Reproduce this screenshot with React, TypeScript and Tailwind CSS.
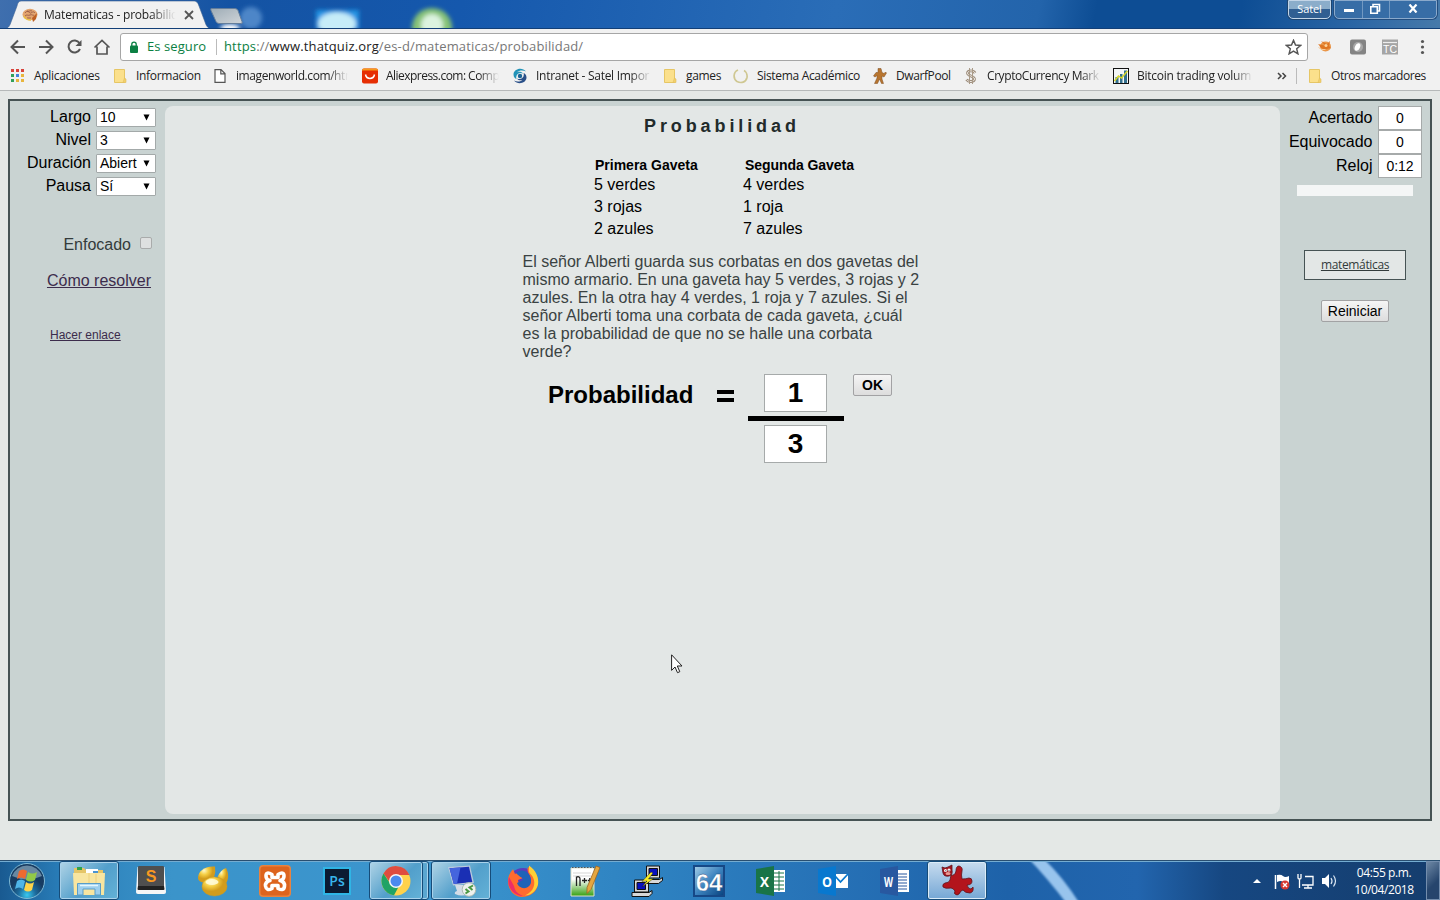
import React from "react";

const ui = "font-['Open_Sans','Noto_Sans',sans-serif]";

type MarkProps = { w: string; textCls: string; label: string; fade?: boolean; icon: React.ReactNode };

function Mark({ w, textCls, label, fade, icon }: MarkProps) {
  return (
    <div className={`flex shrink-0 items-center ${w}`}>
      <span className="h-4 w-4 shrink-0">{icon}</span>
      <span
        className={`ml-2 whitespace-nowrap ${textCls} ${fade ? "[mask-image:linear-gradient(to_right,#000_82%,transparent)]" : ""}`}
      >
        {label}
      </span>
    </div>
  );
}

const Folder = () => (
  <svg width="16" height="16" viewBox="0 0 16 16">
    <path d="M2.5 1.5h10v13h-10z" fill="#fbe08c" stroke="#e6c665" />
    <path d="M12.5 10l1.5 1v3.5h-3z" fill="#f3d06d" stroke="#e0bd5c" strokeWidth=".6" />
  </svg>
);

const AppsGrid = () => (
  <svg width="16" height="16" viewBox="0 0 16 16">
    {["#d8433b", "#d8433b", "#d8433b", "#31a05a", "#4382dd", "#e8b53c", "#31a05a", "#e8b53c", "#e8b53c"].map((c, i) => (
      <rect key={i} x={1 + (i % 3) * 5} y={1 + Math.floor(i / 3) * 5} width="3" height="3" fill={c} />
    ))}
  </svg>
);

const Page = () => (
  <svg width="16" height="16" viewBox="0 0 16 16" fill="#fff" stroke="#555" strokeWidth="1.2">
    <path d="M3 1.6h6l4 4v8.8H3zM8.8 1.6v4.2H13" />
  </svg>
);

const Ali = () => (
  <svg width="16" height="16" viewBox="0 0 16 16">
    <rect y=".5" width="16" height="15" rx="2" fill="#e62e04" />
    <path d="M0 2.500q0-2 2-2h12q2 0 2 2z" fill="#f79a1c" />
    <path d="M3.500 6.500c1 5.200 8 5.200 9 0" fill="none" stroke="#fff" strokeWidth="1.500" />
  </svg>
);

const Swirl = () => (
  <svg width="16" height="16" viewBox="0 0 16 16">
    <path d="M14 3.500C10-1.500 1.500 1 1.500 6.500c0 2.500 1.500 4 3 4.500C3 7 7 3.500 11 5.500c-1-2-5-2.500-6-1 2-2.500 6.500-2.500 9-1z" fill="#2293b8" />
    <path d="M2 12.500c4 5 12.500 2.500 12.500-3 0-2.500-1.500-4-3-4.500C13 9 9 12.500 5 10.500c1 2 5 2.500 6 1-2 2.500-6.500 2.500-9 1z" fill="#294f88" />
    <circle cx="8" cy="8" r="2.200" fill="#1b6597" />
  </svg>
);

const Ring = () => (
  <svg width="16" height="16" viewBox="0 0 16 16" fill="none" stroke="#cfc792" strokeWidth="1.700">
    <path d="M5 2C0 4 0 11 4 13.500c4 2 9 1 10-4 .5-3-1-6-3-7" />
  </svg>
);

const Dwarf = () => (
  <svg width="16" height="16" viewBox="0 0 16 16" fill="#b8752f" stroke="#7d4c20" strokeWidth=".5">
    <path d="M6 .500h3l1 4 2 1 1.500-1.500 1 1-2.500 4-2-1v3l1.500 4.500H9.500L7.500 11 5.500 15.500h-3L5 10V7.500l-2 1.500-1.500-1L4 4.500h2z" />
  </svg>
);

const Dollar = () => (
  <svg width="16" height="16" viewBox="0 0 16 16" fill="none">
    <path d="M12 5C10.500 2.200 5 2.200 4.500 5s7 3 7 6-6 3.500-8 .500" stroke="#9d8d7c" strokeWidth="2.800" />
    <path d="M12 5C10.500 2.200 5 2.200 4.500 5s7 3 7 6-6 3.500-8 .500" stroke="#f1ece5" strokeWidth="1" />
    <path d="M6.500 0v16M9.500 0v16" stroke="#a99a88" strokeWidth="1" />
  </svg>
);

const Bars = () => (
  <svg width="16" height="16" viewBox="0 0 16 16">
    <rect x=".5" y=".5" width="15" height="15" fill="#f3f6f7" stroke="#111" />
    <path d="M2.500 9h3v6h-3zM7 6h2.500v9H7zM11 2.500h3V15h-3z" fill="#33708e" />
    <path d="M1.500 13l4-5 3 2 6-7" stroke="#d6d529" strokeWidth="1.500" fill="none" />
  </svg>
);

const Brain = () => (
  <svg width="16" height="16" viewBox="0 0 16 16">
    <ellipse cx="8" cy="7.500" rx="7.500" ry="5.800" fill="#e3a56e" />
    <path d="M10 11l5-5-1 6-3 3z" fill="#bd5f22" />
    <path d="M3 6c2-3 4-1 5 0s3-3 5 0M3 9c2-2 3 0 5-1s3 1 4 0M5 4c2 1 3-1 5 0M5 11h4" fill="none" stroke="#8f5040" strokeWidth=".8" />
    <path d="M2 9c1 3 4 4 7 4" fill="none" stroke="#e8c044" strokeWidth="1.400" />
  </svg>
);

function TitleBar() {
  return (
    <div className="relative h-[29px] shrink-0 overflow-hidden border-b border-[#123f77] bg-[linear-gradient(100deg,#3f6fae_0%,#1453a3_16%,#1558ad_32%,#2a6db7_58%,#2364ab_72%,#0d4d94_76%,#0d4d94_86%,#2b66a5_94%,#477aaa_100%)]">
      <svg className="absolute left-0 top-0" width="480" height="29" viewBox="0 0 480 29">
        <defs>
          <filter id="soft" x="-30%" y="-30%" width="160%" height="160%"><feGaussianBlur stdDeviation="2" /></filter>
          <linearGradient id="nt" x2="1" y2="1"><stop stopColor="#9eacb6" /><stop offset="1" stopColor="#d0d5d9" /></linearGradient>
        </defs>
        <g filter="url(#soft)">
          <circle cx="251" cy="18" r="11" fill="#4e86c8" />
          <ellipse cx="230" cy="28" rx="10" ry="4" fill="#fff" />
          <path d="M316 10h43v20h-43z" fill="#2494e4" />
          <ellipse cx="337" cy="24" rx="19" ry="12" fill="#c6ecf8" />
          <circle cx="432" cy="28" r="20" fill="#86c277" />
          <circle cx="432" cy="25" r="11" fill="#dcf3df" />
        </g>
        <path d="M211 8.500h24q2 0 3 2l4 11q1 2-1 2h-22q-2 0-3-2l-5-11q-.5-2 0-2z" fill="url(#nt)" stroke="#647e9b" />
        <path d="M5 29c4-1 5-4 6-7l6-16c1-4 2-5 5-5h171c4 0 5 2 6 5l6 16c1 3 2 6 6 7z" fill="#f1f1f1" stroke="#395f92" strokeWidth=".6" />
      </svg>
      <div className="relative flex h-full items-center pl-[22px] pt-px">
        <Brain />
        <div className={`${ui} ml-[6px] w-[133px] whitespace-nowrap text-[12px] tracking-[-0.2px] text-[#222] [mask-image:linear-gradient(to_right,#000_80%,transparent_99%)]`}>
          Matematicas - probabilid
        </div>
        <svg className="ml-[7px]" width="10" height="10" viewBox="0 0 10 10" stroke="#555" strokeWidth="1.800"><path d="M1 1l8 8M9 1L1 9" /></svg>
        <div className="ml-auto flex h-full items-start self-start">
          <div className={`${ui} -mt-px mr-[3px] flex h-[19px] w-[43px] items-center justify-center rounded-b-[5px] border border-[#c3d5e7] bg-[linear-gradient(#8badca_50%,#315f92_50%)] text-[11px] tracking-[-0.1px] text-white shadow-[0_0_0_1px_#1e4570]`}>
            Satel
          </div>
          <div className="-mt-px mr-[3px] flex h-[19px] w-[103px] rounded-b-[5px] border border-[#8aa9cb] bg-[#376da6] shadow-[0_0_0_1px_#234e80]">
            <div className="flex w-[28px] items-center justify-center border-r border-[#7198c2]"><span className="mt-px h-[3px] w-[10px] bg-white" /></div>
            <div className="flex w-[27px] items-center justify-center border-r border-[#7198c2] pb-[2px] pr-[2px]">
              <svg width="12" height="12" viewBox="0 0 12 12" fill="none" stroke="#fff" strokeWidth="1.600"><path d="M4 3V1.500h6.500V8H9" /><path d="M1.800 3.800h6.500v6.500H1.800z" /></svg>
            </div>
            <div className="flex flex-1 items-center justify-center pb-[2px]"><svg width="10" height="9" viewBox="0 0 10 9" stroke="#fff" strokeWidth="2.200"><path d="M1.500.5l7 8M8.500.5l-7 8" /></svg></div>
          </div>
        </div>
      </div>
    </div>
  );
}

function AddressBar() {
  return (
    <div className="flex h-[32px] shrink-0 items-center bg-[#f1f1f1] pl-[8px] pt-[4px]">
      <svg width="104" height="20" viewBox="0 0 104 20" fill="none" stroke="#555" strokeWidth="2">
        <path d="M17 10H4M10 3.500L3.500 10l6.500 6.500" />
        <path d="M31 10h13M38 3.500l6.500 6.500-6.500 6.500" />
        <path d="M71.500 6A6 6 0 1 0 72 12" /><path d="M73.500 3v6h-6z" fill="#555" stroke="none" />
        <path d="M86.500 10.500L94 3.500l7.500 7M89 9.500V17h10V9.500" strokeWidth="1.700" />
      </svg>
      <div className={`${ui} ml-[8px] flex h-[28px] w-[1188px] items-center rounded-[3px] border border-[#a6a6a6] bg-white`}>
        <svg className="ml-[8px]" width="10" height="13" viewBox="0 0 10 13"><rect x="1" y="4.500" width="8" height="7.500" rx="1" fill="#0b8043" /><path d="M2.800 5V3.300a2.200 2.200 0 0 1 4.400 0V5" fill="none" stroke="#0b8043" strokeWidth="1.300" /></svg>
        <span className="ml-[8px] w-[69px] whitespace-nowrap text-[13px] tracking-[0.08px] text-[#0b8043]">Es seguro</span>
        <span className="h-[16px] w-px bg-[#bbb]" />
        <span className="ml-[7px] whitespace-nowrap text-[13px] tracking-[0.145px] text-[#777]"><span className="text-[#0b8043]">https</span>://<span className="text-[#222]">www.thatquiz.org</span>/es-d/matematicas/probabilidad/</span>
        <svg className="ml-auto mr-[5px]" width="17" height="16" viewBox="0 0 24 24" fill="none" stroke="#555" strokeWidth="2.200"><path d="M12 2l3 7 7.500.700-5.700 5 1.800 7.500L12 18.200l-6.600 4 1.800-7.500-5.700-5L9 9z" /></svg>
      </div>
      <svg className="ml-[8px]" width="116" height="20" viewBox="0 0 116 20">
        <ellipse cx="9.500" cy="9.500" rx="5.500" ry="5" fill="#ea9648" /><path d="M2 7l8 2-5-5 6 3 3-3-1 5 2 2-4 1q-6 1-8-4" fill="#df7622" /><path d="M2.500 10.500q3 3 7 2" fill="none" stroke="#f5c998" /><circle cx="10" cy="8.500" r="1.500" fill="#fbd49a" />
        <rect x="34" y="2.500" width="16" height="15" rx="2" fill="#848484" /><circle cx="42" cy="10" r="5" fill="#a8a8a8" /><ellipse cx="41.500" cy="10" rx="2.500" ry="4" transform="rotate(25 41.500 10)" fill="#fff" />
        <rect x="66" y="2.500" width="16" height="15" fill="#a5a5a5" /><path d="M67 5.500h14" stroke="#eee" strokeWidth="1.200" />
        <text x="74" y="16" textAnchor="middle" fontSize="10.500" fontFamily="Liberation Sans" fill="#fff">TC</text>
        <circle cx="106.500" cy="4.500" r="1.600" fill="#555" /><circle cx="106.500" cy="10" r="1.600" fill="#555" /><circle cx="106.500" cy="15.500" r="1.600" fill="#555" />
      </svg>
    </div>
  );
}

function Bookmarks() {
  return (
    <div className={`${ui} flex h-[30px] shrink-0 items-center border-b border-[#b5b9b9] bg-[#f1f1f1] pl-[10px] pt-px text-[12px] text-[#222]`}>
      <Mark w="w-[102px]" label="Aplicaciones" textCls="tracking-[-0.3px]" icon={<AppsGrid />} />
      <Mark w="w-[100px]" label="Informacion" textCls="-ml-px tracking-[-0.3px]" icon={<Folder />} />
      <Mark w="w-[150px]" label="imagenworld.com/htm" textCls="w-[112px] tracking-[-0.42px]" fade icon={<Page />} />
      <Mark w="w-[150px]" label="Aliexpress.com: Comp" textCls="w-[113px] tracking-[-0.53px]" fade icon={<Ali />} />
      <Mark w="w-[150px]" label="Intranet - Satel Impor" textCls="w-[115px] tracking-[-0.28px]" fade icon={<Swirl />} />
      <Mark w="w-[71px]" label="games" textCls="tracking-[-0.35px]" icon={<Folder />} />
      <Mark w="w-[139px]" label="Sistema Académico" textCls="tracking-[-0.32px]" icon={<Ring />} />
      <Mark w="w-[91px]" label="DwarfPool" textCls="tracking-[-0.4px]" icon={<Dwarf />} />
      <Mark w="w-[150px]" label="CryptoCurrency Mark" textCls="w-[114px] tracking-[-0.42px]" fade icon={<Dollar />} />
      <Mark w="w-[150px]" label="Bitcoin trading volum" textCls="w-[116px] tracking-[-0.26px]" fade icon={<Bars />} />
      <svg className="ml-[14px]" width="10" height="8" viewBox="0 0 10 8" fill="none" stroke="#444" strokeWidth="1.500"><path d="M1 1l3 3-3 3M5.500 1l3 3-3 3" /></svg>
      <span className="ml-[9px] h-[16px] w-px bg-[#bbb]" />
      <span className="ml-[10px]"><Mark w="w-[130px]" label="Otros marcadores" textCls="tracking-[-0.42px]" icon={<Folder />} /></span>
    </div>
  );
}

const options = [["Largo", "10"], ["Nivel", "3"], ["Duración", "Abiert"], ["Pausa", "Sí"]];
const scores = [["Acertado", "0"], ["Equivocado", "0"], ["Reloj", "0:12"]];
const button = "rounded-[2px] border border-[#a2a2a4] bg-[linear-gradient(#f5f5f5,#dddddd)] text-black";

function Quiz() {
  return (
    <div className="flex h-[769px] shrink-0 bg-[#e4e8e6] px-2 pb-[39px] pt-2 font-['Liberation_Sans',Arial,sans-serif] text-[16px] text-black">
      <div className="flex w-full border-2 border-[#465354] bg-[#c9d3d2] pb-[5px] pt-[5px]">
        <div className="w-[155px]">
          <div className="flex flex-col gap-[4px] pt-[2px]">
            {options.map(([label, value]) => (
              <div key={label} className="flex h-[19px] items-center justify-end pr-[9px]">
                <span className="mb-[2px] mr-[5px] leading-[18px]">{label}</span>
                <span className="flex h-[19px] w-[60px] items-center rounded-[1px] border border-[#a3a9a9] bg-white pl-[3px]">
                  <span className="w-[38px] whitespace-nowrap text-[14px] leading-[17px]">{value}</span>
                  <svg className="mb-px ml-[5px]" width="7" height="7" viewBox="0 0 7 7"><path d="M.5.5h6l-3 6z" /></svg>
                </span>
              </div>
            ))}
          </div>
          <div className="mt-[40px] flex h-[18px] items-center justify-end pr-[13px] text-[#333b3b]">
            Enfocado
            <span className="mb-[4px] ml-[9px] h-[12px] w-[12px] rounded-[2px] border border-[#a9abab] bg-[#dee0e0]" />
          </div>
          <div className="mt-[18px] h-[18px] pr-[14px] text-right leading-[18px] text-[#3c2c4c] underline">Cómo resolver</div>
          <div className="mt-[38px] pl-[40px] text-[12px] leading-[15px] text-[#3c2c4c] underline">Hacer enlace</div>
        </div>
        <div className="flex w-[1115px] flex-col rounded-[8px] bg-[#e3e7e6]">
          <div className="mt-[10px] h-[20px] pl-[479px] text-[18px] font-bold leading-[20px] tracking-[3.9px] text-[#222b2b]">Probabilidad</div>
          <div className="mt-[21px] grid grid-cols-[149px_149px] pl-[429px]">
            <div className="h-[17px] pl-px text-[14px] font-bold leading-[16px]">Primera Gaveta</div>
            <div className="h-[17px] pl-[2px] text-[14px] font-bold leading-[16px] tracking-[-0.06px]">Segunda Gaveta</div>
            {["5 verdes", "4 verdes", "3 rojas", "1 roja", "2 azules", "7 azules"].map((t) => (
              <div key={t} className="h-[22px] leading-[22px]">{t}</div>
            ))}
          </div>
          <div className="ml-[357.500px] mt-[13px] whitespace-nowrap leading-[18px] text-[#3a4242]">
            El señor Alberti guarda sus corbatas en dos gavetas del<br />mismo armario. En una gaveta hay 5 verdes, 3 rojas y 2<br />azules. En la otra hay 4 verdes, 1 roja y 7 azules. Si el<br />señor Alberti toma una corbata de cada gaveta, ¿cuál<br />es la probabilidad de que no se halle una corbata<br />verde?
          </div>
          <div className="mt-[13px] flex items-start pl-[383px] font-bold">
            <span className="mt-[7px] w-[169px] text-[24px] leading-[28px]">Probabilidad</span>
            <svg className="mt-[16px]" width="17" height="12" viewBox="0 0 17 12"><path d="M0 0h17v4H0zM0 8h17v4H0z" /></svg>
            <div className="ml-[14px] flex w-[96px] flex-col pl-[16px] text-[28px]">
              <span className="flex h-[38px] w-[63px] items-center justify-center border border-[#a6aaaa] bg-white">1</span>
              <span className="-ml-[16px] mb-[4px] mt-[4px] h-[5px] w-[96px] bg-black" />
              <span className="flex h-[38px] w-[63px] items-center justify-center border border-[#a6aaaa] bg-white">3</span>
            </div>
            <span className={`${button} ml-[9px] flex h-[22px] w-[39px] items-center justify-center text-[14px]`}>OK</span>
          </div>
        </div>
        <div className="flex flex-1 flex-col">
          {scores.map(([label, value]) => (
            <div key={label} className="flex h-[24px] items-center justify-end pr-[8px]">
              <span className="mr-[5.500px]">{label}</span>
              <span className="flex h-[24px] w-[44px] items-center justify-center border border-[#a6aaaa] bg-white pt-px text-[14px]">{value}</span>
            </div>
          ))}
          <div className="ml-[17px] mt-[7px] h-[11px] w-[116px] bg-[#f4f6f6]" />
          <div className={`${ui} ml-[24px] mt-[54px] flex h-[30px] w-[102px] items-center justify-center border border-[#465354] bg-[#e3e7e6] text-[12px] tracking-[-0.35px] text-[#333b3b] underline`}>matemáticas</div>
          <div className={`${button} ml-[41px] mt-[20px] flex h-[22px] w-[68px] items-center justify-center text-[14px]`}>Reiniciar</div>
        </div>
      </div>
    </div>
  );
}

const Explorer = () => (
  <svg width="32" height="32" viewBox="0 0 32 32">
    <path d="M1 3h10l2 2h17v24H1z" fill="#e5c567" /><path d="M4 2h5v3H4z" fill="#30a24a" /><path d="M13 4h12v4H13z" fill="#fff" /><path d="M20 6h5v3h-5z" fill="#4a94d2" />
    <path d="M0 8h32l-1 22H1z" fill="#f8e5a0" /><path d="M16 8v14M23 9v12" stroke="#ecd07f" /><path d="M4.500 30V18.500h23V30h-5.500v-6H10v6z" fill="#9dcfee" stroke="#589dc9" /><path d="M7 20.500h18" stroke="#e4f6ff" strokeWidth="1.500" />
  </svg>
);
const Sublime = () => (
  <svg width="32" height="32" viewBox="0 0 32 32"><path d="M2.500 2h27l1.500 25q0 2-2 2H3q-2 0-2-2z" fill="#f6f6f6" /><path d="M4 1h24q1 0 1 1v19H3V2q0-1 1-1z" fill="#4f4f4f" /><path d="M3 21h26l.500 3q0 1-1 1h-25q-1 0-1-1z" fill="#222" /><text x="16" y="16.500" textAnchor="middle" fontSize="16" fontWeight="bold" fontFamily="Liberation Sans" fill="#f89820">S</text></svg>
);
const Navicat = () => (
  <svg width="32" height="32" viewBox="0 0 32 32"><defs><radialGradient id="gold" cx=".35" cy=".25"><stop stopColor="#fff9c8" /><stop offset=".5" stopColor="#f5cf45" /><stop offset="1" stopColor="#d29c1c" /></radialGradient></defs><path d="M1 13C1 6 8 .500 18 1.500q1 5-1 11L8 18Q1 17 1 13z" fill="url(#gold)" /><path d="M20.500 12q3-7 8.500-9c3 5 3 12-1 17q-3-5-7.500-8z" fill="url(#gold)" /><ellipse cx="17.500" cy="21.500" rx="12.500" ry="9.500" fill="url(#gold)" stroke="#c99a20" strokeWidth=".5" /><ellipse cx="15" cy="17" rx="6.500" ry="3" fill="#fffbd5" opacity=".9" /></svg>
);
const Xampp = () => (
  <svg width="32" height="32" viewBox="0 0 32 32"><rect width="32" height="32" rx="4" fill="#e9833f" /><rect x="1.500" y="1.500" width="29" height="29" rx="3" fill="#dd641e" /><path d="M13 9.500Q7 6 7 11q0 4 4 4.500Q6 17 6.500 21q1 5.500 6.500 2.500v-3h6v3q6 3 6.500-2.500Q26 17 21 15.500q4-.5 4-4.500 0-5-6-1.500v3h-6z" fill="none" stroke="#fff" strokeWidth="3.600" strokeLinejoin="round" /></svg>
);
const Photoshop = () => (
  <svg width="30" height="30" viewBox="0 0 30 30"><rect x="2" y="2" width="26" height="26" fill="#0b1b32" stroke="#2fb5e5" strokeWidth="2" /><text x="15" y="19.500" textAnchor="middle" fontFamily="Open Sans" fontSize="14" fontWeight="600" fill="#38b6ed">Ps</text></svg>
);
const ChromeLogo = () => (
  <svg width="32" height="32" viewBox="0 0 32 32"><circle cx="16" cy="16" r="14.500" fill="#ffd24c" /><path d="M3.500 8.500A14.500 14.500 0 0 1 29.500 10H16a6 6 0 0 0-5.600 8z" fill="#df4c40" /><path d="M3.500 8.500l7 10.500c2 3 5 3.500 8 3l-4.500 8.300A14.500 14.500 0 0 1 3.500 8.500z" fill="#20a365" /><circle cx="16" cy="16" r="7" fill="#f6f6f6" /><circle cx="16" cy="16" r="5.500" fill="#4b89ef" /></svg>
);
const Remote = () => (
  <svg width="32" height="32" viewBox="0 0 32 32"><path d="M10 20h9l1 6q4 1 3 3-6 3-13 0-1-2 2-3z" fill="#d3dce6" /><path d="M3 2l22-1.500L29 18 8 20.500z" fill="#b9c8dc" /><path d="M4.500 3.200l19.500-1.400L27.300 17 8.800 19z" fill="#1a2fb4" /><path d="M4.500 3.200l11-.8L12 18.700l-3.200.3z" fill="#4565dd" /><circle cx="24" cy="24.500" r="6.800" fill="#eef1ee" stroke="#acb9b1" /><path d="M20.500 24l3 2.500-3 2M28 20.500l-3.500 2 3 2.500" stroke="#4b9843" strokeWidth="2" fill="none" /></svg>
);
const Firefox = () => (
  <svg width="32" height="32" viewBox="0 0 32 32"><circle cx="16" cy="17" r="14" fill="#5c3bbb" /><path d="M1 16C1 10 4 7 6 4l2 5c4-3 8 0 8 4l-5 2c1 9 12 9 13 1 0-7-5-8-3-14 6 3 11 9 10 17-1 8-8 13-16 13S1 25 1 16z" fill="#ff6b2e" /><path d="M9 8c5-6 16-1 15 9-1 8-12 8-14 1l6-3c0-3-4-3-7-7z" fill="#1f63b8" /><path d="M22 4V.5c7 5 10 12 9 19-2 8-9 11-13 11 9-4 11-12 8-18-1-3-5-4-4-8.500z" fill="#ffcf35" /><path d="M2 12c-3 10 5 19 14 19-7-3-8-6-9-10z" fill="#ed2d68" /></svg>
);
const Notepad = () => (
  <svg width="32" height="32" viewBox="0 0 32 32"><defs><linearGradient id="np" x2="0" y2="1"><stop offset=".4" stopColor="#fff" /><stop offset="1" stopColor="#35a010" /></linearGradient></defs><path d="M2 3h23v28H2z" fill="url(#np)" stroke="#e0e0cc" /><path d="M3 2.500h22" stroke="#555" strokeDasharray="1.500 1.500" /><path d="M4 8h18M4 11h18" stroke="#d5d5d5" /><path d="M7.500 21v-9q3.500-1 3.500 2v7M13 15.500h5M15.500 13v5M18.800 15.500h4M20.800 13v5" stroke="#222" strokeWidth="1.300" fill="none" /><path d="M27 1l4 1.500-9 22-4 4v-6z" fill="#e5a640" stroke="#9c6421" strokeWidth=".8" /></svg>
);
const Putty = () => (
  <svg width="32" height="32" viewBox="0 0 32 32" stroke="#111"><path d="M15.500 1h13v12h-13zM15.500 14.500h13l3-2v3l-4 3h-12zM3.500 15h14v12h-14zM1 27.500h17l3-2v3l-3 3H1z" fill="#d8d8d8" /><path d="M18 3.500h8.500v7H18zM6 17.500h8.500v7H6z" fill="#0810bd" /><path d="M20 7l-9 9.500 5-.5-5 6 11.500-8.500-5 .5 4.500-6z" fill="#f8ed26" strokeWidth=".4" /></svg>
);
const Aida = () => (
  <svg width="32" height="32" viewBox="0 0 32 32"><defs><linearGradient id="ai" x2="1" y2="1"><stop stopColor="#a5cfe8" /><stop offset=".5" stopColor="#3d84bf" /><stop offset="1" stopColor="#07417e" /></linearGradient></defs><path d="M1 1h30v30H1z" fill="url(#ai)" stroke="#164886" strokeWidth="2" /><text x="16" y="25.500" textAnchor="middle" fontSize="24" fontFamily="Liberation Sans" fontWeight="bold" fill="#fff" stroke="#1c4a80" strokeWidth=".3">64</text></svg>
);

function Office({ color, letter, kind }: { color: string; letter: string; kind: "sheet" | "mail" | "doc" }) {
  return (
    <svg width="32" height="32" viewBox="0 0 32 32">
      {kind === "sheet" && <><path d="M17 5h13v22H17z" fill="#fff" /><path d="M19 8h10M19 12h10M19 16h10M19 20h10M19 24h10M24 6v20" stroke={color} /></>}
      {kind === "doc" && <><path d="M17 5h13v22H17z" fill="#fff" /><path d="M17 9h11M17 12h11M17 15h11M17 18h11M17 21h11M17 24h11" stroke={color} strokeWidth="1.200" /></>}
      {kind === "mail" && <><path d="M18 9h13v14H18z" fill="#fff" /><path d="M18 11l5.500 6L31 9" stroke={color} strokeWidth="1.800" fill="none" /></>}
      <path d="M1 4l18-3v30L1 28z" fill={color} />
      <text x="5" y="21.500" fontFamily="Open Sans" fontWeight="700" fontSize="15" fill="#fff" textLength={kind === "mail" ? 10 : 9} lengthAdjust="spacingAndGlyphs">{letter}</text>
    </svg>
  );
}
const Dragon = () => (
  <svg width="34" height="34" viewBox="0 0 34 34">
    <path d="M12 11q4 1 5-4 0-5 3-5 4 1 3 5-1 4 0 8 4 0 7-1 3 0 3 3 0 4-5 4 1 4 4 4 2-2 2-2 1 5-3 6-5 0-7-3l-2 1q-2 4-4 4-4-1-2-4-2-3-4-3-6 1-8-1-1-3 2-4 4 0 5-3z" fill="#b3141c" stroke="#5f111b" strokeWidth=".8" transform="translate(-1 0)" />
    <path d="M2 3l3 1 3-1 4-2v5q1 5-3 6-5 1-6-3z" fill="#a3161f" stroke="#5f111b" strokeWidth=".8" />
    <circle cx="5.500" cy="6.500" r="1.500" fill="#fff" /><circle cx="9" cy="6" r="1.500" fill="#fff" /><circle cx="5.800" cy="6.800" r=".5" /><circle cx="9" cy="6.300" r=".5" /><ellipse cx="8" cy="9.500" rx="2.500" ry="1.500" fill="#e99b93" />
  </svg>
);

const tasks: { icon: React.ReactNode; mode?: string }[] = [
  { icon: <Explorer />, mode: "open" }, { icon: <Sublime /> }, { icon: <Navicat /> }, { icon: <Xampp /> }, { icon: <Photoshop /> },
  { icon: <ChromeLogo />, mode: "stack" }, { icon: <Remote />, mode: "open" }, { icon: <Firefox /> }, { icon: <Notepad /> }, { icon: <Putty /> }, { icon: <Aida /> },
  { icon: <Office color="#197447" letter="X" kind="sheet" /> }, { icon: <Office color="#0878cf" letter="O" kind="mail" /> }, { icon: <Office color="#2858a0" letter="W" kind="doc" /> },
  { icon: <Dragon />, mode: "active" },
];

function Taskbar() {
  return (
    <div className="relative flex h-[40px] shrink-0 overflow-hidden border-t border-[#294f71] bg-[linear-gradient(90deg,#195a91_0%,#287bb6_4%,#3b94ca_12%,#3b95ce_30%,#2e82c1_45%,#2671b6_58%,#1e62a9_70%,#2265ae_79%,#164781_85%,#153d6d_100%)] shadow-[inset_0_1px_#74acd1]">
      <svg className="absolute left-[1020px] top-px" width="70" height="38" viewBox="0 0 70 38"><defs><filter id="streak"><feGaussianBlur stdDeviation="1.200" /></filter></defs><path d="M8-4h15q20 19 37 46H47Q28 17 8-4" fill="#a5cff5" opacity=".9" filter="url(#streak)" /></svg>
      <div className="relative flex h-full w-[58px] items-center justify-center pr-[4px]">
        <svg width="38" height="38" viewBox="0 0 38 38">
          <defs><radialGradient id="orb" cx=".5" cy=".9"><stop stopColor="#39c9ef" /><stop offset=".5" stopColor="#1c6b9d" /><stop offset="1" stopColor="#173b61" /></radialGradient></defs>
          <circle cx="19" cy="19" r="17.500" fill="url(#orb)" stroke="#7eb9d5" />
          <path d="M4 14a16 16 0 0 1 30 0Q19 21 4 14" fill="#b9d6e4" opacity=".5" />
          <path d="M11 9q4-3 8 0l-2 8q-4-3-8 0z" fill="#ef6a30" /><path d="M20 10q4 3 9 0l-2 8q-4 3-9 0z" fill="#92c947" /><path d="M9 19q4-3 8 0l-2 8q-4-3-8 0z" fill="#4fb5e9" /><path d="M18 20q4 3 8 0l-2 8q-4 3-8 0z" fill="#ffd349" />
        </svg>
      </div>
      {tasks.map((t, i) => (
        <div key={i} className="relative h-[39px] w-[62px] shrink-0 pl-px">
          {t.mode === "stack" && <div className="absolute left-[2px] top-0 h-[39px] w-[59px] rounded-[3px] border border-[#164c79] bg-[#5ba6d0] shadow-[inset_0_0_0_1px_#a9d2eb]" />}
          <div className={`relative flex h-[39px] items-center justify-center rounded-[3px] ${t.mode === "active" ? "w-[60px] border border-[#164c79] bg-[linear-gradient(#c7dcef,#75a7d5)] shadow-[inset_0_0_0_1px_#dcecf8]" : t.mode === "stack" ? "w-[54px] border border-[#164c79] bg-[linear-gradient(135deg,#b1d4e6,#529fcb_55%,#64b2d7)] shadow-[inset_0_0_0_1px_#a9d2eb]" : t.mode === "open" ? "w-[60px] border border-[#164c79] bg-[linear-gradient(135deg,#b1d4e6,#529fcb_55%,#64b2d7)] shadow-[inset_0_0_0_1px_#a9d2eb]" : "w-[60px]"}`}>{t.icon}</div>
        </div>
      ))}
      <div className={`${ui} ml-auto flex items-center text-[12px] text-white`}>
        <svg width="92" height="20" viewBox="0 0 92 20">
          <path d="M2 12l4-4 4 4z" fill="#fff" />
          <path d="M24.500 4v14" stroke="#fff" strokeWidth="1.500" /><path d="M26 4q4-1 6 1t6 0v7q-4 1-6-1t-6 0z" fill="#fff" /><circle cx="34" cy="14" r="4.500" fill="#d73930" /><path d="M32 12l4 4M36 12l-4 4" stroke="#fff" strokeWidth="1.400" />
          <path d="M54 5.500h8v8.500H51M53 17h8M57 14v3M50 3v4M47 3v4q0 1 1.500 1T50 7M48.500 8v9" fill="none" stroke="#fff" strokeWidth="1.300" />
          <path d="M71 7h3l4-4v14l-4-4h-3z" fill="#fff" /><path d="M80 7q2 3 0 6M82.500 4.500q4 5.500 0 11" fill="none" stroke="#dce8f4" strokeWidth="1.200" />
        </svg>
        <div className="ml-[7px] w-[68px] whitespace-nowrap text-center leading-[17px] tracking-[-0.42px]">04:55 p.m.<br />10/04/2018</div>
        <div className="ml-[8px] h-full w-[14px] border border-[#738dad] bg-[linear-gradient(135deg,#6e88a5,#26456d_60%)]" />
      </div>
    </div>
  );
}

export default function App() {
  return (
    <div className="relative flex h-[900px] w-[1440px] flex-col overflow-hidden bg-[#e4e8e6]">
      <TitleBar />
      <AddressBar />
      <Bookmarks />
      <Quiz />
      <Taskbar />
      <svg className="absolute left-[671px] top-[654px]" width="13" height="20" viewBox="0 0 13 20"><path d="M.6.800v15.600L4 13l2.500 5.700 2.300-1L6.300 12H11z" fill="#fff" stroke="#222" /></svg>
    </div>
  );
}
